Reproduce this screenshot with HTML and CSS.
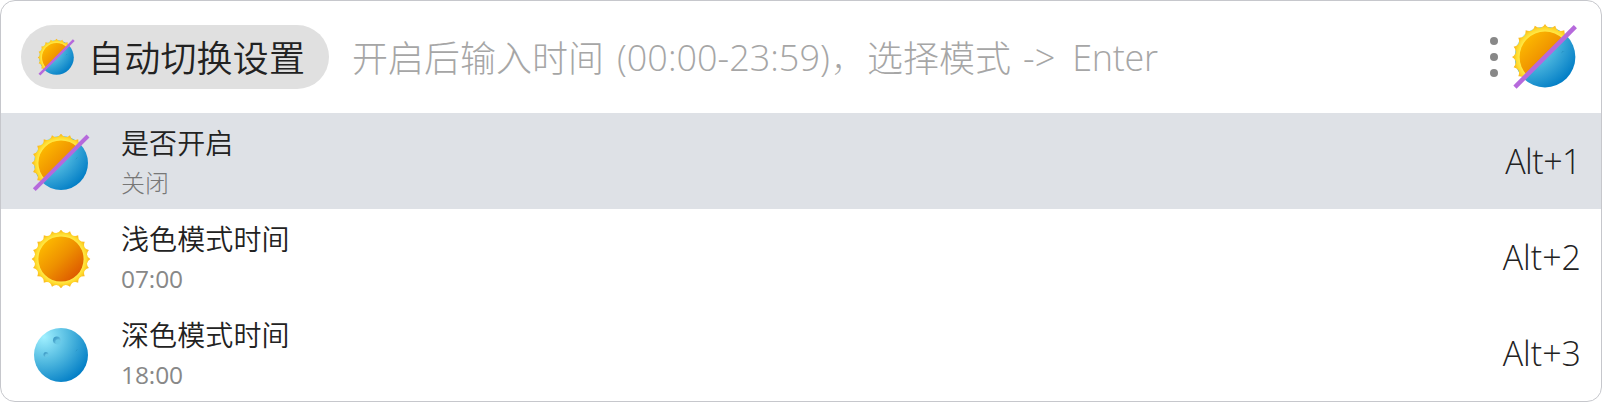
FILE: index.html
```html
<!DOCTYPE html>
<html lang="zh-CN">
<head>
<meta charset="utf-8">
<title>自动切换设置</title>
<link rel="stylesheet" href="styles.css">
</head>
<body>
<svg class="defs" width="0" height="0" aria-hidden="true">
  <defs>
    <linearGradient id="core" x1="0.12" y1="0.12" x2="0.88" y2="0.88"><stop offset="0" stop-color="#fdb900"/><stop offset="0.5" stop-color="#ee9000"/><stop offset="1" stop-color="#dd5800"/></linearGradient>
    <radialGradient id="rays" gradientUnits="userSpaceOnUse" cx="32" cy="32" r="29"><stop offset="0.78" stop-color="#ffea48"/><stop offset="0.88" stop-color="#ffd92c"/><stop offset="1" stop-color="#f9b219"/></radialGradient>
    <radialGradient id="moonfill" gradientUnits="userSpaceOnUse" cx="15" cy="14" r="52"><stop offset="0" stop-color="#a0f0ff"/><stop offset="0.5" stop-color="#4fb8df"/><stop offset="1" stop-color="#007cc5"/></radialGradient>
    <linearGradient id="crater" x1="0" y1="0" x2="1" y2="1"><stop offset="0" stop-color="#2f8fbd"/><stop offset="1" stop-color="#7fd3ee"/></linearGradient>
    <clipPath id="upper"><path d="M0 0H64L0 64Z"/></clipPath>
    <symbol id="sun" viewBox="0 0 64 64">
      <path id="sunrays" fill="url(#rays)" d=""/>
      <circle cx="32" cy="32" r="22.6" fill="url(#core)"/>
    </symbol>
    <symbol id="moon" viewBox="0 0 64 64">
      <circle cx="32" cy="32" r="27" fill="url(#moonfill)"/>
      <circle cx="27.8" cy="17.3" r="3.8" fill="url(#crater)"/>
      <circle cx="29" cy="18.9" r="2.7" fill="#69c9e7"/>
      <circle cx="17" cy="31.5" r="2.5" fill="url(#crater)"/>
      <circle cx="17.8" cy="32.5" r="1.7" fill="#67c6e5"/>
      <path d="M46.5 28.8q.2-2.3 2.8-2.2q-1.8.6-2.8 2.2" fill="#2389b9"/>
    </symbol>
    <symbol id="split" viewBox="0 0 64 64">
      <use href="#moon" width="64" height="64"/>
      <g clip-path="url(#upper)"><use href="#sun" width="64" height="64"/></g>
      <path d="M5.3 58.7L59 5" stroke="#b669dc" stroke-width="4"/>
    </symbol>
  </defs>
</svg>
<main class="launcher">
  <header class="search">
    <div class="tag">
      <svg class="tag-icon"><use href="#split"/></svg>
      <span class="tag-label">自动切换设置</span>
    </div>
    <div class="hint"><span>开启后输入时间</span><span class="latin range">(00:00-23:59)</span><span class="comma">，</span><span>选择模式</span><span class="latin arrow">-&gt;</span><span class="latin enter">Enter</span></div>
    <div class="dots"><i></i><i></i><i></i></div>
    <svg class="app-icon"><use href="#split"/></svg>
  </header>
  <ul class="results">
    <li class="row selected">
      <svg class="row-icon"><use href="#split"/></svg>
      <div class="copy"><div class="title">是否开启</div><div class="sub">关闭</div></div>
      <div class="key first">Alt+1</div>
    </li>
    <li class="row">
      <svg class="row-icon"><use href="#sun"/></svg>
      <div class="copy"><div class="title">浅色模式时间</div><div class="sub time">07:00</div></div>
      <div class="key">Alt+2</div>
    </li>
    <li class="row">
      <svg class="row-icon"><use href="#moon"/></svg>
      <div class="copy"><div class="title">深色模式时间</div><div class="sub time">18:00</div></div>
      <div class="key">Alt+3</div>
    </li>
  </ul>
</main>
<script src="icons.js"></script>
</body>
</html>
```

FILE: icons.js
```js
// Builds the twenty scalloped points around the sun.
const count = 20, step = Math.PI * 2 / count;
const at = (r, a) => (32 + r * Math.sin(a)).toFixed(2) + ' ' + (32 - r * Math.cos(a)).toFixed(2);
let d = 'M' + at(29.3, 0);
for (let i = 0; i < count; i++) {
  d += 'Q' + at(23.8, (i + 0.5) * step) + ' ' + at(29.3, (i + 1) * step);
}
document.getElementById('sunrays').setAttribute('d', d + 'Z');
```

FILE: styles.css
```css
* { box-sizing: border-box; }
body {
  margin: 0;
  background: #fff;
  color: #222;
  font-family: "Open Sans", "Noto Sans CJK SC", sans-serif;
}
.defs { display: block; }
.launcher {
  width: 1602px;
  height: 402px;
  border: 1px solid #c6c7cc;
  border-radius: 15px;
  overflow: hidden;
  background: #fff;
}
.search {
  display: flex;
  align-items: center;
  height: 112px;
  padding: 0 20px;
}
.tag {
  display: flex;
  align-items: center;
  width: 308px;
  height: 64px;
  padding-left: 15px;
  border-radius: 32px;
  background: #e0e0e0;
}
.tag-icon { width: 41px; height: 41px; }
.tag-label {
  margin-left: 11px;
  padding-bottom: 1px;
  font: 36px/63px "Noto Sans CJK SC", sans-serif;
  font-weight: 350;
  letter-spacing: 0.2px;
  white-space: nowrap;
}
.hint {
  display: flex;
  flex: 1;
  margin-left: 23px;
  padding-bottom: 1px;
  color: #a6a6a6;
  font: 300 36px/63px "Noto Sans CJK SC", sans-serif;
  white-space: nowrap;
}
.latin {
  padding-top: 1px;
  font-family: "Open Sans", sans-serif;
  font-weight: 300;
}
.range { width: 214px; margin-left: 13px; }
.comma { font-weight: 100; }
.arrow { margin-left: 12px; }
.enter { margin-left: 17px; letter-spacing: -0.3px; }
.dots {
  display: flex;
  flex-direction: column;
  gap: 8px;
}
.dots i {
  width: 8px;
  height: 8px;
  border-radius: 50%;
  background: #888;
}
.app-icon { width: 72px; height: 72px; margin: 0 0 0 11px; }
.results { margin: 0; padding: 0; list-style: none; }
.row {
  display: flex;
  align-items: center;
  height: 96px;
  padding: 0 20px 0 28px;
}
.selected { background: #dee1e6; }
.row-icon { width: 64px; height: 64px; margin-top: 4px; }
.copy { flex: 1; margin-left: 28px; padding-top: 2px; }
.title {
  font: 350 28px/39px "Noto Sans CJK SC", sans-serif;
  letter-spacing: 0.1px;
}
.sub {
  color: #777;
  font: 300 24px/40px "Noto Sans CJK SC", sans-serif;
}
.time {
  padding-top: 1px;
  font-family: "Open Sans", sans-serif;
  font-size: 24.5px;
  font-weight: 400;
  line-height: 39px;
  letter-spacing: -0.1px;
  color: #888;
}
.key { font-size: 34px; font-weight: 300; }
.first { letter-spacing: -0.5px; }
```
